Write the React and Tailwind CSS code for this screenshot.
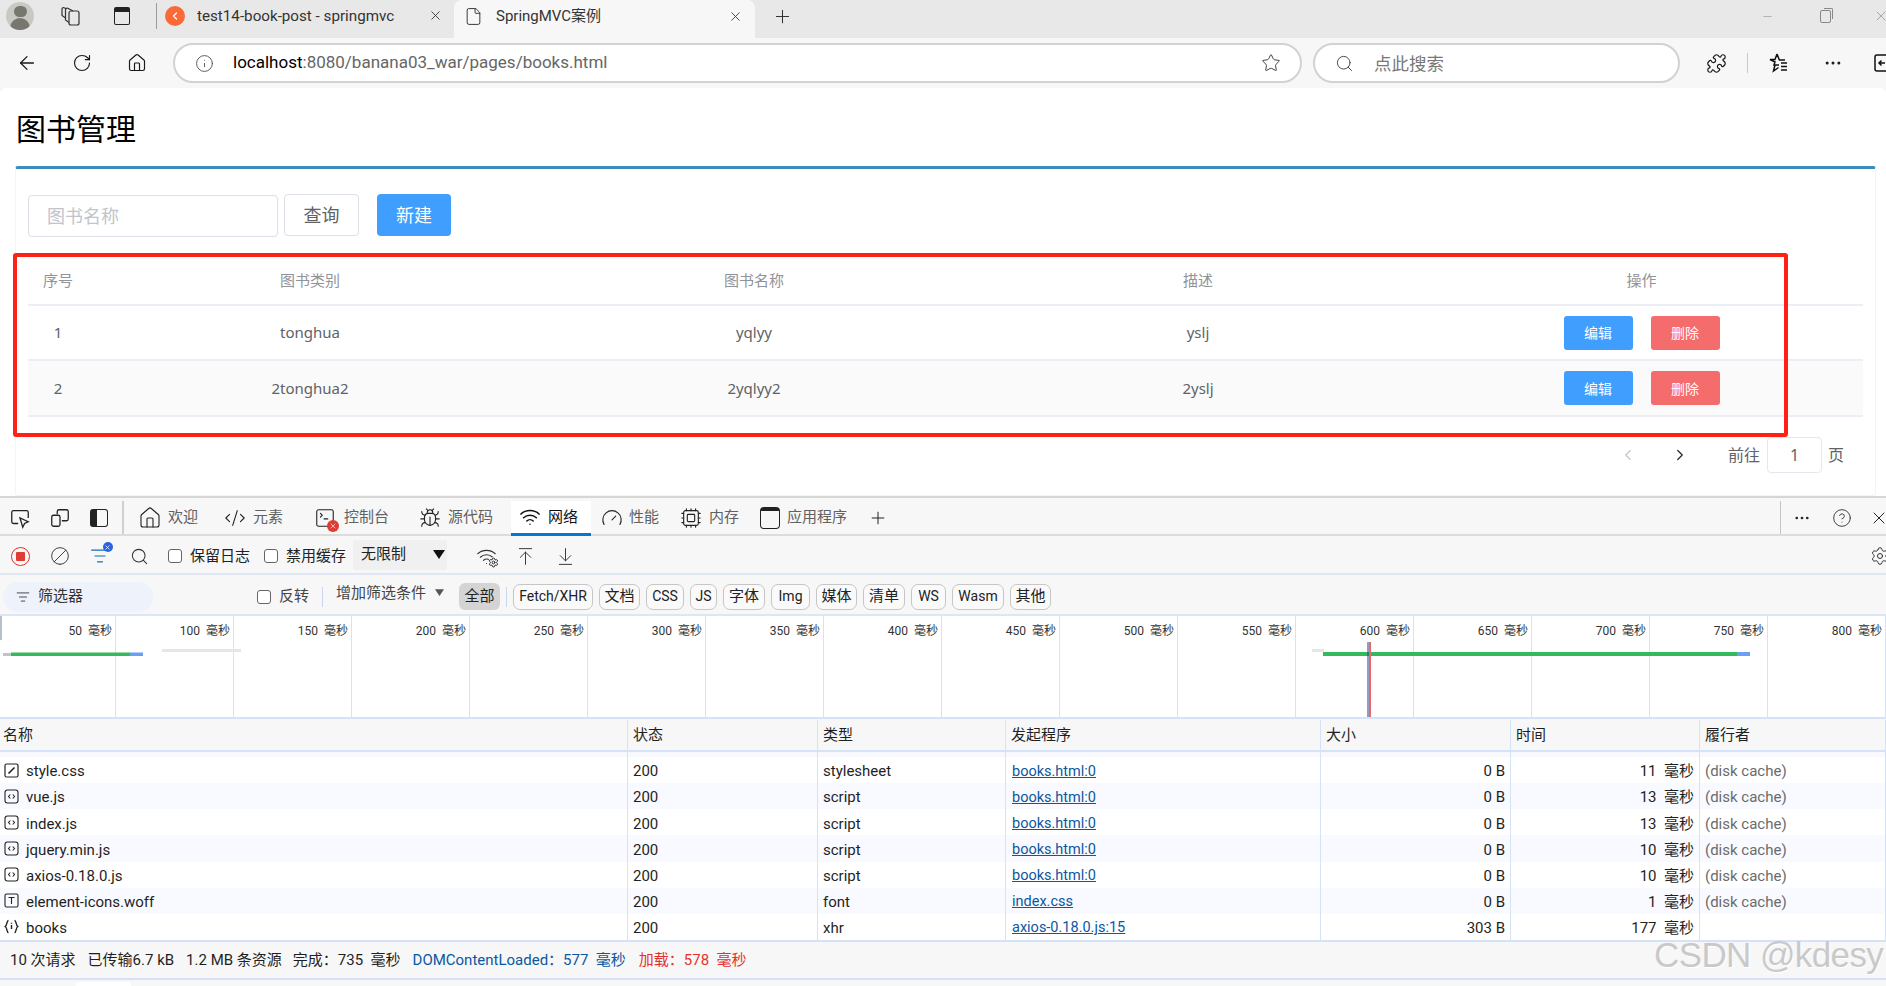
import React from 'react';
import { ArrowLeft, RotateCw, House, Info, Star, Search, Puzzle, Ellipsis, Plus, X, Minus, File, CodeXml, SquareTerminal, Bug, Wifi, Gauge, Cpu, CircleHelp, Settings, ArrowUpToLine, ArrowDownToLine, Ban, ChevronLeft, ChevronRight, ListFilter } from 'lucide-react';

const Tri = ({ c = 'w-[12px] h-[9px]' }) => (
  <svg viewBox="0 0 12 9" className={c}><polygon points="0,0 12,0 6,9" fill="currentColor" /></svg>
);

const FileIcon = ({ kind }) => {
  if (kind === 'css') return (
    <svg viewBox="0 0 15 15" className="w-[15px] h-[15px] shrink-0" fill="none" stroke="#222" strokeWidth="1.2">
      <rect x="1" y="1" width="13" height="13" rx="1.5" /><path d="M4.5 10.5 10.5 4.5" strokeWidth="1.6" />
    </svg>
  );
  if (kind === 'js') return (
    <svg viewBox="0 0 15 15" className="w-[15px] h-[15px] shrink-0" fill="none" stroke="#222" strokeWidth="1.1">
      <rect x="1" y="1" width="13" height="13" rx="2.5" /><path d="M6.3 5.5 4.5 7.5l1.8 2M8.7 5.5l1.8 2-1.8 2" />
    </svg>
  );
  if (kind === 'font') return (
    <svg viewBox="0 0 15 15" className="w-[15px] h-[15px] shrink-0" fill="none" stroke="#222" strokeWidth="1.1">
      <rect x="1" y="1" width="13" height="13" rx="1.5" /><path d="M4.5 4.5h6M7.5 4.5v6.5" />
    </svg>
  );
  return (
    <svg viewBox="0 0 15 15" className="w-[15px] h-[15px] shrink-0" fill="none" stroke="#222" strokeWidth="1.4">
      <path d="M4.5 1.5C2.5 1.5 3.5 6 1.2 7.5 3.5 9 2.5 13.500 4.500 13.500M10.500 1.500C12.500 1.500 11.500 6 13.800 7.500 11.500 9 12.500 13.500 10.500 13.500M7.500 6v4M7.500 3.800v1" />
    </svg>
  );
};

const rows = [
  ['css', 'style.css', 'stylesheet', 'books.html:0', '0 B', '11', '(disk cache)'],
  ['js', 'vue.js', 'script', 'books.html:0', '0 B', '13', '(disk cache)'],
  ['js', 'index.js', 'script', 'books.html:0', '0 B', '13', '(disk cache)'],
  ['js', 'jquery.min.js', 'script', 'books.html:0', '0 B', '10', '(disk cache)'],
  ['js', 'axios-0.18.0.js', 'script', 'books.html:0', '0 B', '10', '(disk cache)'],
  ['font', 'element-icons.woff', 'font', 'index.css', '0 B', '1', '(disk cache)'],
  ['xhr', 'books', 'xhr', 'axios-0.18.0.js:15', '303 B', '177', ''],
];

const chips = [
  ['Fetch/XHR', 'w-[80px] text-[14px]'], ['文档', 'w-[41px]'], ['CSS', 'w-[38px] text-[14px]'], ['JS', 'w-[27px] text-[14px]'], ['字体', 'w-[42px]'], ['Img', 'w-[39px] text-[14px]'],
  ['媒体', 'w-[41px]'], ['清单', 'w-[42px]'], ['WS', 'w-[35px] text-[14px]'], ['Wasm', 'w-[52px] text-[14px]'], ['其他', 'w-[41px]'],
];

const ticks = [50, 100, 150, 200, 250, 300, 350, 400, 450, 500, 550, 600, 650, 700, 750, 800];

const gridCols = 'grid grid-cols-[628px_190px_188px_315px_190px_189px_186px]';
const cell = 'border-r border-[#d5e3f9] truncate';
const devFont = "font-['Roboto','Noto_Sans_CJK_SC',sans-serif]";

const BookRow = ({ no, cat, name, desc, alt, h }) => (
  <div className={`grid grid-cols-[60px_444px_444px_444px_443px] items-center border-b-2 border-[#ebeef5] text-[15px] text-[#606266] text-center ${alt ? 'bg-[#fafafa]' : 'bg-white'} ${h}`}>
    <div>{no}</div>
    <div>{cat}</div>
    <div>{name}</div>
    <div>{desc}</div>
    <div className="flex justify-center gap-[18px] text-[14px] text-white">
      <div className="w-[69px] h-[34px] rounded-[3px] bg-[#409eff] flex items-center justify-center">编辑</div>
      <div className="w-[69px] h-[34px] rounded-[3px] bg-[#f56c6c] flex items-center justify-center">删除</div>
    </div>
  </div>
);

export default function App() {
  return (
    <div className="relative w-[1886px] h-[986px] overflow-hidden bg-[#f7f7f7] text-[#1f1f1f] font-['Noto_Sans','Noto_Sans_CJK_SC',sans-serif]">
      {/* tab strip */}
      <div className={`flex items-center h-[38px] pb-[6px] bg-[#e8e8e8] text-[15px] text-[#333] ${devFont}`}>
        <div className="ml-[6px] w-[28px] h-[28px] rounded-full bg-[#c9c9c4] overflow-hidden flex flex-col items-center shrink-0">
          <div className="w-[13px] h-[13px] mt-[4px] rounded-full bg-[#77776f]" />
          <div className="w-[20px] h-[14px] mt-[1px] rounded-t-full bg-[#77776f]" />
        </div>
        <div className="ml-[6px] w-[60px] flex justify-center shrink-0">
          <svg viewBox="0 0 22 20" className="w-[22px] h-[20px]" fill="none" stroke="#333" strokeWidth="1.2">
            <rect x="10" y="5" width="10" height="14" rx="2" />
            <path d="M10 16.500 6.500 14V3.500a1.500 1.500 0 0 1 2.300-1.200L14 5" />
            <path d="M6.500 12 3 9.500V3a1.500 1.500 0 0 1 2.300-1.200L7.500 3" />
          </svg>
        </div>
        <div className="w-[44px] flex justify-center shrink-0">
          <div className="w-[16px] h-[18px] border-[1.5px] border-[#222] rounded-[2px] border-t-[5px]" />
        </div>
        <div className="ml-[12px] w-px h-[26px] bg-[#9a9a9a] shrink-0" />
        <div className="flex items-center w-[297px] shrink-0">
          <div className="ml-[8px] w-[20px] h-[20px] rounded-full bg-[#f96a36] flex items-center justify-center shrink-0">
            <ChevronLeft size={12} color="#fff" strokeWidth={2.5} />
          </div>
          <div className="ml-[12px] w-[200px] whitespace-nowrap overflow-hidden text-[15.200px]">test14-book-post - springmvc</div>
          <X size={15} strokeWidth={1.4} className="ml-[31px] shrink-0" />
        </div>
        <div className="flex items-center w-[301px] h-[38px] -mb-[6px] pb-[6px] shrink-0 bg-[#f7f7f7] rounded-t-[8px]">
          <File size={19} strokeWidth={1.2} className="ml-[10px] shrink-0" />
          <div className="ml-[13px] w-[219px] whitespace-nowrap">SpringMVC案例</div>
          <X size={15} strokeWidth={1.4} className="shrink-0 ml-[13px]" />
        </div>
        <Plus size={21} strokeWidth={1.2} className="ml-[17px] shrink-0" />
        <Minus size={13} strokeWidth={1} className="ml-[968px] shrink-0 text-[#888]" />
        <div className="relative ml-[46px] w-[11px] h-[13px] border border-[#888] rounded-[2px] shrink-0">
          <div className="absolute -top-[3px] -right-[3px] w-[9px] h-[11px] border-t border-r border-[#888] rounded-tr-[2px]" />
        </div>
        <X size={16} strokeWidth={1} className="ml-[42px] shrink-0 text-[#888]" />
      </div>

      {/* address row */}
      <div className="flex items-center h-[50px] bg-[#f7f7f7] text-[#1a1a1a]">
        <div className="w-[54px] flex justify-center shrink-0"><ArrowLeft size={22} strokeWidth={1.4} /></div>
        <div className="w-[56px] flex justify-center shrink-0"><RotateCw size={20} strokeWidth={1.4} /></div>
        <div className="w-[54px] flex justify-center shrink-0"><House size={20} strokeWidth={1.4} /></div>
        <div className="ml-[9px] w-[1129px] h-[40px] shrink-0 bg-white border-2 border-[#d2d2d2] rounded-full flex items-center">
          <Info size={19} strokeWidth={1.2} className="ml-[20px] text-[#555] shrink-0" />
          <div className={`ml-[19px] text-[17px] text-[#666] whitespace-nowrap ${devFont}`}><span className="text-black">localhost</span>:8080/banana03_war/pages/books.html</div>
          <Star size={20} strokeWidth={1.2} className="ml-auto mr-[19px] text-[#444] shrink-0" />
        </div>
        <div className="ml-[11px] w-[367px] h-[40px] shrink-0 bg-white border-2 border-[#d2d2d2] rounded-full flex items-center">
          <Search size={19} strokeWidth={1.2} className="ml-[20px] text-[#444] shrink-0" />
          <div className="ml-[20px] text-[17.500px] text-[#777]">点此搜索</div>
        </div>
        <div className="ml-[24px] w-[24px] flex justify-center shrink-0"><Puzzle size={21} strokeWidth={1.4} /></div>
        <div className="ml-[19px] w-px h-[20px] bg-[#c8c8c8] shrink-0" />
        <div className="ml-[18px] w-[24px] flex items-center justify-center shrink-0">
          <svg viewBox="0 0 24 24" className="w-[24px] h-[24px]" fill="none" stroke="#111" strokeWidth="1.5">
            <path d="M11 3l2.400 6H19M13 14H8l1-3-5-2.500h5L11 3M9 14l-1.500 6 5-3.500M15 12h6M15 15.500h6M15 19h6" />
          </svg>
        </div>
        <div className="ml-[31px] w-[24px] flex justify-center shrink-0"><Ellipsis size={20} strokeWidth={1.6} /></div>
        <svg viewBox="0 0 20 20" className="ml-[29px] w-[20px] h-[20px] shrink-0" fill="none" stroke="#111" strokeWidth="1.5">
          <rect x="1" y="2" width="17" height="16" rx="2" /><path d="M11 10H5M7.500 7.500 5 10l2.500 2.500" />
        </svg>
      </div>

      {/* page */}
      <div className="h-[410px] bg-white rounded-t-[6px] border-b-2 border-[#d6d6d6] pt-[21px]">
        <div className="ml-[16px] text-[30px] leading-[40px] text-black">图书管理</div>
        <div className="mt-[17px] ml-[15px] w-[1861px] h-[330px] border-t-[3px] border-x border-b border-t-[#3c8dbc] border-x-[#f4f4f4] border-b-[#f4f4f4] rounded-[3px]">
          <div className="flex items-start mt-[25px] ml-[12px] h-[43px]">
            <div className="mt-[1px] w-[250px] h-[42px] border-[1.5px] border-[#dcdfe6] rounded-[4px] pl-[18px] flex items-center text-[18px] text-[#c0c4cc]">图书名称</div>
            <div className="ml-[6px] w-[75px] h-[42px] border-[1.5px] border-[#dcdfe6] rounded-[4px] flex items-center justify-center text-[18px] text-[#606266]">查询</div>
            <div className="ml-[18px] w-[74px] h-[42px] bg-[#409eff] rounded-[4px] flex items-center justify-center text-[18px] text-white">新建</div>
          </div>
          <div className="ml-[12px] mt-[20px] w-[1835px]">
            <div className="grid grid-cols-[60px_444px_444px_444px_443px] items-center h-[49px] border-b-2 border-[#ebeef5] text-[15px] text-[#909399] text-center">
              <div>序号</div><div>图书类别</div><div>图书名称</div><div>描述</div><div>操作</div>
            </div>
            <BookRow no="1" cat="tonghua" name="yqlyy" desc="yslj" h="h-[55px]" />
            <BookRow no="2" cat="2tonghua2" name="2yqlyy2" desc="2yslj" alt h="h-[56px]" />
          </div>
          <div className="flex items-center justify-end pr-[31px] mt-[20px] h-[36px] text-[16px] text-[#606266]">
            <ChevronLeft size={18} strokeWidth={1.5} className="text-[#c0c4cc] shrink-0" />
            <ChevronRight size={18} strokeWidth={1.8} className="ml-[34px] text-[#303133] shrink-0" />
            <div className="ml-[39px]">前往</div>
            <div className="ml-[7px] w-[55px] h-[36px] border-[1.5px] border-[#e4e7ed] rounded-[4px] flex items-center justify-center">1</div>
            <div className="ml-[6px]">页</div>
          </div>
        </div>
      </div>

      {/* devtools tabs */}
      <div className={`flex items-center h-[38px] pt-[3px] border-b-2 border-[#dcdcdc] bg-[#f7f7f7] text-[15px] text-[#616161] ${devFont}`}>
        <div className="w-[40px] flex justify-center shrink-0 text-[#222]">
          <svg viewBox="0 0 24 24" className="w-[22px] h-[22px]" fill="none" stroke="currentColor" strokeWidth="1.4">
            <path d="M10 18H5a2 2 0 0 1-2-2V6a2 2 0 0 1 2-2h14a2 2 0 0 1 2 2v6" /><path d="M12 12l3 10 2-4 4-2z" />
          </svg>
        </div>
        <div className="w-[39px] flex justify-center shrink-0 text-[#222]">
          <svg viewBox="0 0 24 24" className="w-[22px] h-[22px]" fill="none" stroke="currentColor" strokeWidth="1.4">
            <path d="M9 8V5a2 2 0 0 1 2-2h8a2 2 0 0 1 2 2v8a2 2 0 0 1-2 2h-5" /><rect x="3" y="9" width="9" height="12" rx="2" />
          </svg>
        </div>
        <div className="w-[40px] flex justify-center shrink-0">
          <div className="w-[18px] h-[18px] rounded-[3px] border-[1.5px] border-[#222] border-l-[7px]" />
        </div>
        <div className="ml-[3px] w-[2px] h-[33px] bg-[#cfcfcf] shrink-0" />

        <House size={24} strokeWidth={1.1} className="ml-[14px] shrink-0 text-[#222]" />
        <div className="ml-[6px] shrink-0">欢迎</div>
        <CodeXml size={22} strokeWidth={1.2} className="ml-[26px] shrink-0 text-[#222]" />
        <div className="ml-[7px] shrink-0">元素</div>
        <div className="relative ml-[31px] shrink-0 text-[#222]">
          <SquareTerminal size={22} strokeWidth={1.2} />
          <div className="absolute -right-[3px] -bottom-[3px] w-[12px] h-[12px] rounded-full bg-[#e03a32] text-white flex items-center justify-center"><X size={8} strokeWidth={2} /></div>
        </div>
        <div className="ml-[8px] shrink-0">控制台</div>
        <Bug size={22} strokeWidth={1.2} className="ml-[30px] shrink-0 text-[#222]" />
        <div className="ml-[7px] shrink-0">源代码</div>
        <div className="ml-[18px] w-[80px] h-[35px] mt-[2px] bg-white border-b-[3px] border-[#0078d4] flex items-center pl-[8px] shrink-0 text-[#111]">
          <Wifi size={22} strokeWidth={1.6} className="shrink-0" />
          <div className="ml-[7px]">网络</div>
        </div>
        <Gauge size={22} strokeWidth={1.2} className="ml-[10px] shrink-0 text-[#222]" />
        <div className="ml-[6px] shrink-0">性能</div>
        <Cpu size={22} strokeWidth={1.2} className="ml-[21px] shrink-0 text-[#222]" />
        <div className="ml-[7px] shrink-0">内存</div>
        <div className="ml-[21px] w-[20px] h-[22px] border-[1.5px] border-[#222] rounded-[4px] border-t-[4px] shrink-0" />
        <div className="ml-[7px] shrink-0">应用程序</div>
        <Plus size={20} strokeWidth={1.2} className="ml-[21px] shrink-0 text-[#222]" />
        <div className="ml-[892px] w-px h-[33px] bg-[#c4c4c4] shrink-0" />
        <div className="w-[42px] flex justify-center shrink-0 text-[#222]"><Ellipsis size={18} strokeWidth={1.6} /></div>
        <div className="w-[38px] flex justify-center shrink-0 text-[#333]"><CircleHelp size={20} strokeWidth={1.1} /></div>
        <X size={20} strokeWidth={1.2} className="ml-[8px] shrink-0 text-[#222]" />
      </div>

      {/* network toolbar */}
      <div className={`flex items-center h-[39px] pt-[3px] border-b-2 border-[#dfe7f5] bg-[#f7f7f7] text-[15px] text-[#222] ${devFont}`}>
        <div className="w-[40px] flex justify-center shrink-0">
          <div className="w-[19px] h-[19px] rounded-full border border-[#d9322c] flex items-center justify-center"><div className="w-[9px] h-[9px] bg-[#e03a32] rounded-[1px]" /></div>
        </div>
        <div className="w-[39px] flex justify-center shrink-0 text-[#333]"><Ban size={20} strokeWidth={1.1} className="rotate-90" /></div>
        <div className="w-[41px] flex justify-center shrink-0">
          <div className="relative text-[#0f6cbd]">
            <ListFilter size={20} strokeWidth={1.4} />
            <div className="absolute -top-[4px] -right-[3px] w-[10px] h-[10px] rounded-full bg-[#2563eb] text-white flex items-center justify-center"><X size={7} strokeWidth={2.5} /></div>
          </div>
        </div>
        <div className="w-[38px] flex justify-center shrink-0 text-[#333]"><Search size={19} strokeWidth={1.3} /></div>
        <div className="ml-[10px] w-[14px] h-[14px] border border-[#666] rounded-[3px] bg-white shrink-0" />
        <div className="ml-[8px] shrink-0">保留日志</div>
        <div className="ml-[14px] w-[14px] h-[14px] border border-[#666] rounded-[3px] bg-white shrink-0" />
        <div className="ml-[8px] shrink-0">禁用缓存</div>
        <div className="ml-[7px] -mt-[3px] w-[94px] h-[30px] bg-[#f0f0f0] rounded-[2px] flex items-center pl-[8px] pr-[1px] shrink-0">
          <div>无限制</div>
          <div className="ml-auto mr-[1px] text-[#111]"><Tri /></div>
        </div>
        <div className="ml-[19px] w-[40px] flex justify-center shrink-0">
          <div className="relative text-[#333]">
            <Wifi size={21} strokeWidth={1.3} />
            <Settings size={11} strokeWidth={2} className="absolute -right-[2px] -bottom-[1px] bg-[#f7f7f7] rounded-full text-[#222]" />
          </div>
        </div>
        <div className="w-[39px] flex justify-center shrink-0 text-[#333]"><ArrowUpToLine size={21} strokeWidth={1.1} /></div>
        <div className="w-[40px] flex justify-center shrink-0 text-[#333]"><ArrowDownToLine size={21} strokeWidth={1.1} /></div>
        <Settings size={20} strokeWidth={1.2} className="ml-[1285px] shrink-0 text-[#333]" />
      </div>

      {/* filter row */}
      <div className={`flex items-center h-[41px] pt-[4px] border-b-2 border-[#dbe6f8] bg-[#f7f7f7] text-[15px] text-[#222] ${devFont}`}>
        <div className="ml-[3px] w-[150px] h-[30px] rounded-full bg-[#edf2fb] flex items-center pl-[13px] shrink-0 text-[#333]">
          <ListFilter size={14} strokeWidth={1.5} className="shrink-0" />
          <div className="ml-[8px]">筛选器</div>
        </div>
        <div className="ml-[104px] w-[14px] h-[14px] border border-[#666] rounded-[3px] bg-white shrink-0" />
        <div className="ml-[8px] text-[#444] shrink-0">反转</div>
        <div className="ml-[13px] w-px h-[20px] bg-[#c9d8ee] shrink-0" />
        <div className="ml-[13px] mb-[6px] text-[#444] shrink-0">增加筛选条件</div>
        <div className="ml-[9px] w-[10px] mb-[9px] text-[#555] shrink-0"><Tri c="w-[9px] h-[7px]" /></div>
        <div className="ml-[14px] w-[41px] h-[27px] rounded-[6px] bg-[#d4d4d4] flex items-center justify-center shrink-0">全部</div>
        <div className="ml-[6px] w-px h-[20px] bg-[#c9d8ee] shrink-0" />
        <div className="ml-[6px] flex gap-[6px] shrink-0">
          {chips.map(([t, w]) => (
            <div key={t} className={`${w} h-[26px] rounded-[7px] border border-[#c6c6c6] bg-[#fafafa] flex items-center justify-center`}>{t}</div>
          ))}
        </div>
      </div>

      {/* overview */}
      <div className={`relative flex h-[101px] bg-white text-[12px] text-[#333] ${devFont}`}>
        {ticks.map((t, i) => (
          <div key={t} className={`${i === 0 ? 'w-[116px]' : 'w-[118px]'} shrink-0 h-full border-r border-[#d5e3f9] pr-[3px] pt-[6px] text-right leading-[18px] whitespace-pre`}>{t}  毫秒</div>
        ))}
        <svg className="absolute left-0 top-0 w-[1886px] h-[101px]">
          <rect x="0" y="0" width="2" height="24" fill="#b8c0cc" />
          <rect x="3" y="37" width="8" height="3" fill="#c4c4c4" />
          <rect x="11" y="36.500" width="119" height="3.500" fill="#36b85c" />
          <rect x="130" y="36.500" width="13" height="3.500" fill="#6b9ff0" />
          <rect x="162" y="33" width="79" height="3" fill="#e6e6e6" />
          <rect x="1312" y="33" width="12" height="3" fill="#e6e6e6" />
          <rect x="1323" y="36" width="414" height="4" fill="#36b85c" />
          <rect x="1737" y="36" width="13" height="4" fill="#6b9ff0" />
          <rect x="1367.500" y="26" width="1" height="75" fill="#2b3a8c" />
          <rect x="1369" y="26" width="2" height="75" fill="#e8696a" />
        </svg>
      </div>

      {/* table */}
      <div className={devFont}>
        <div className={`${gridCols} h-[35px] pt-[1px] border-y-2 border-[#d5e3f9] bg-[#f7f7f7] text-[15px] items-stretch`}>
          {['名称', '状态', '类型', '发起程序', '大小', '时间', '履行者'].map((h, i) => (
            <div key={h} className={`${cell} flex items-center ${i === 0 ? 'pl-[3px]' : 'pl-[5px]'}`}>{h}</div>
          ))}
        </div>
        <div className={`${gridCols} h-[5px] bg-[#f7f9fe]`}>
          {[0, 1, 2, 3, 4, 5, 6].map(i => <div key={i} className="border-r border-[#d5e3f9]" />)}
        </div>
        {rows.map((r, i) => (
          <div key={r[1]} className={`${gridCols} h-[26.140px] text-[15px] items-stretch ${i % 2 ? 'bg-[#f8faff]' : 'bg-white'}`}>
            <div className={`${cell} flex items-center pl-[4px]`}><FileIcon kind={r[0]} /><span className="ml-[7px] pt-[3px]">{r[1]}</span></div>
            <div className={`${cell} flex items-center pl-[5px] pt-[3px]`}>200</div>
            <div className={`${cell} flex items-center pl-[5px] pt-[3px]`}>{r[2]}</div>
            <div className={`${cell} flex items-center pl-[6px] pt-[3px]`}><span className="text-[#0b57a0] underline text-[14.500px]">{r[3]}</span></div>
            <div className={`${cell} flex items-center justify-end pr-[5px] pt-[3px]`}>{r[4]}</div>
            <div className={`${cell} flex items-center justify-end pr-[5px] pt-[3px] whitespace-pre`}>{r[5]}  毫秒</div>
            <div className={`${cell} flex items-center pl-[5px] pt-[3px] text-[#6b6b6b]`}>{r[6]}</div>
          </div>
        ))}

        {/* footer */}
        <div className="flex items-center h-[40px] border-y-2 border-[#d5e3f9] bg-[#f7f7f7] pl-[10px] text-[15px] whitespace-pre">
          <div>10 次请求</div>
          <div className="ml-[12px]">已传输6.7 kB</div>
          <div className="ml-[12px]">1.2 MB 条资源</div>
          <div className="ml-[11px]">完成：735  毫秒</div>
          <div className="ml-[12px] text-[#0b57a0]">DOMContentLoaded：577  毫秒</div>
          <div className="ml-[13px] text-[#e5322e]">加载：578  毫秒</div>
        </div>
      </div>
      <div className="ml-[76px] mt-[2px] w-[55px] h-[4px] bg-white rounded-t-[3px]" />

      {/* annotations laid over the shot */}
      <div className="absolute left-[13px] top-[253px] w-[1775px] h-[184px] border-[4px] border-[#ff2016] rounded-[3px]" />
      <div className="absolute left-[1654px] top-[932px] text-[35px] leading-[46px] tracking-[-0.6px] whitespace-nowrap text-[#c9c9c9] font-['Liberation_Sans',sans-serif] [text-shadow:1px_1px_1px_#ffffff]">CSDN @kdesy</div>
    </div>
  );
}
